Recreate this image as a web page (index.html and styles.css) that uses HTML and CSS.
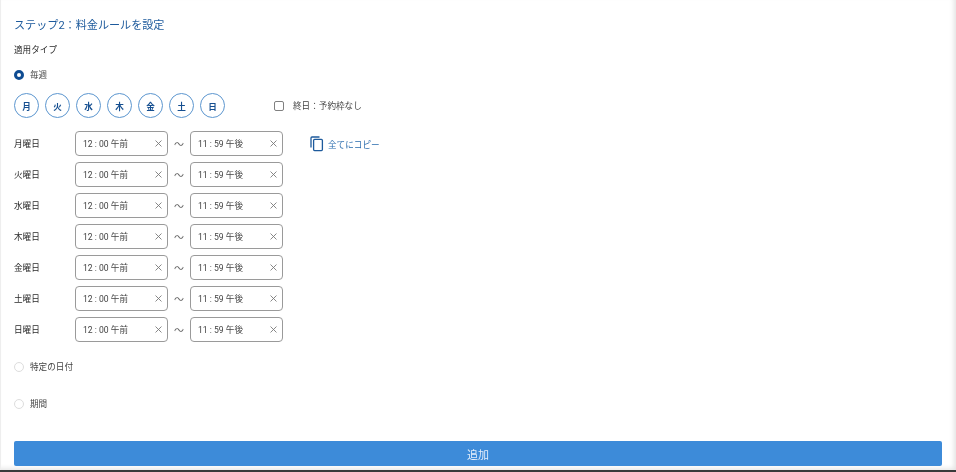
FILE: index.html
```html
<!DOCTYPE html>
<html lang="ja">
<head>
<meta charset="utf-8">
<title>料金ルール</title>
<link rel="stylesheet" href="styles.css">
</head>
<body>
<main class="panel">
  <h2 class="title">ステップ2：料金ルールを設定</h2>
  <div class="label type-label">適用タイプ</div>
  <div class="radio-row weekly"><span class="radio on"></span><span class="label">毎週</span></div>
  <div class="days-row">
    <div class="days">
      <span class="day">月</span><span class="day">火</span><span class="day">水</span><span class="day">木</span><span class="day">金</span><span class="day">土</span><span class="day">日</span>
    </div>
    <span class="check"></span><span class="label">終日：予約枠なし</span>
  </div>
  <div class="rows">
    <div class="row">
      <span class="label row-name">月曜日</span>
      <div class="field"><span>12 : 00 午前</span><svg class="x" viewBox="0 0 8 8"><path d="M.6.6l6.8 6.8M7.4.6L.6 7.4"/></svg></div>
      <span class="tilde">〜</span>
      <div class="field"><span>11 : 59 午後</span><svg class="x" viewBox="0 0 8 8"><path d="M.6.6l6.8 6.8M7.4.6L.6 7.4"/></svg></div>
      <div class="copy">
        <svg class="copy-icon" viewBox="0 0 14 16"><path d="M9.5 1H2a1 1 0 0 0-1 1v9.5"/><rect x="3.6" y="3.4" width="8.8" height="11.2" rx="1"/></svg>
        <span>全てにコピー</span>
      </div>
    </div>
    <div class="row">
      <span class="label row-name">火曜日</span>
      <div class="field"><span>12 : 00 午前</span><svg class="x" viewBox="0 0 8 8"><path d="M.6.6l6.8 6.8M7.4.6L.6 7.4"/></svg></div>
      <span class="tilde">〜</span>
      <div class="field"><span>11 : 59 午後</span><svg class="x" viewBox="0 0 8 8"><path d="M.6.6l6.8 6.8M7.4.6L.6 7.4"/></svg></div>
    </div>
    <div class="row">
      <span class="label row-name">水曜日</span>
      <div class="field"><span>12 : 00 午前</span><svg class="x" viewBox="0 0 8 8"><path d="M.6.6l6.8 6.8M7.4.6L.6 7.4"/></svg></div>
      <span class="tilde">〜</span>
      <div class="field"><span>11 : 59 午後</span><svg class="x" viewBox="0 0 8 8"><path d="M.6.6l6.8 6.8M7.4.6L.6 7.4"/></svg></div>
    </div>
    <div class="row">
      <span class="label row-name">木曜日</span>
      <div class="field"><span>12 : 00 午前</span><svg class="x" viewBox="0 0 8 8"><path d="M.6.6l6.8 6.8M7.4.6L.6 7.4"/></svg></div>
      <span class="tilde">〜</span>
      <div class="field"><span>11 : 59 午後</span><svg class="x" viewBox="0 0 8 8"><path d="M.6.6l6.8 6.8M7.4.6L.6 7.4"/></svg></div>
    </div>
    <div class="row">
      <span class="label row-name">金曜日</span>
      <div class="field"><span>12 : 00 午前</span><svg class="x" viewBox="0 0 8 8"><path d="M.6.6l6.8 6.8M7.4.6L.6 7.4"/></svg></div>
      <span class="tilde">〜</span>
      <div class="field"><span>11 : 59 午後</span><svg class="x" viewBox="0 0 8 8"><path d="M.6.6l6.8 6.8M7.4.6L.6 7.4"/></svg></div>
    </div>
    <div class="row">
      <span class="label row-name">土曜日</span>
      <div class="field"><span>12 : 00 午前</span><svg class="x" viewBox="0 0 8 8"><path d="M.6.6l6.8 6.8M7.4.6L.6 7.4"/></svg></div>
      <span class="tilde">〜</span>
      <div class="field"><span>11 : 59 午後</span><svg class="x" viewBox="0 0 8 8"><path d="M.6.6l6.8 6.8M7.4.6L.6 7.4"/></svg></div>
    </div>
    <div class="row">
      <span class="label row-name">日曜日</span>
      <div class="field"><span>12 : 00 午前</span><svg class="x" viewBox="0 0 8 8"><path d="M.6.6l6.8 6.8M7.4.6L.6 7.4"/></svg></div>
      <span class="tilde">〜</span>
      <div class="field"><span>11 : 59 午後</span><svg class="x" viewBox="0 0 8 8"><path d="M.6.6l6.8 6.8M7.4.6L.6 7.4"/></svg></div>
    </div>
  </div>
  <div class="radio-row specific"><span class="radio"></span><span class="label">特定の日付</span></div>
  <div class="radio-row period"><span class="radio"></span><span class="label">期間</span></div>
  <button class="add">追加</button>
</main>
</body>
</html>
```
FILE: styles.css
```css
* { box-sizing: border-box; }
html, body { margin: 0; height: 100%; overflow: hidden; }
body {
  background: #3a3a3a;
  font-family: Roboto, "Noto Sans CJK JP", sans-serif;
  color: #2b2b2b;
}
.panel {
  height: 470px;
  padding: 0 14px 0 13px;
  background: #fff;
  border-left: 1px solid #eeeeee;
  box-shadow: inset -6px 0 5px -4px #e2e2e2, inset 0 -5px 4px -3px #e8e8e8;
  display: flex;
  flex-direction: column;
  filter: blur(0.35px);
}
.title {
  margin: 18px 0 0;
  font-size: 11.1px;
  line-height: 15px;
  font-weight: 400;
  color: #1d5a9c;
}
.label { font-size: 8.6px; line-height: 12px; white-space: nowrap; }
.type-label { margin-top: 11px; }
.radio-row { display: flex; align-items: center; gap: 6px; height: 12px; color: #444; }
.weekly { margin-top: 13px; }
.specific { margin-top: 19px; }
.period { margin-top: 25px; }
.radio {
  width: 10px; height: 10px; border-radius: 50%;
  border: 1px solid #dddddd; background: #fff; flex: none;
}
.radio.on { border: 3px solid #0f4c92; }
.days-row { display: flex; align-items: center; margin-top: 12px; height: 25px; color: #444; }
.days { display: flex; gap: 6px; width: 260px; }
.day {
  width: 25px; height: 25px; border-radius: 50%;
  border: 1px solid #5c96cf;
  color: #164f90; font-size: 8.6px; font-weight: 700;
  display: flex; align-items: center; justify-content: center;
}
.check {
  width: 10px; height: 10px; border: 1px solid #808080; border-radius: 2px;
  margin-right: 9px;
}
.rows { display: flex; flex-direction: column; gap: 6px; margin-top: 13px; }
.row { display: flex; align-items: center; height: 25px; }
.row-name { width: 61px; }
.field {
  width: 93px; height: 25px; padding: 0 5px 1px 7px;
  border: 1px solid #9a9a9a; border-radius: 4px;
  display: flex; align-items: center; justify-content: space-between;
  font-size: 8.6px; color: #444;
}
.x { width: 7px; height: 7px; fill: none; stroke: #777; stroke-width: 1; }
.tilde { width: 22px; text-align: center; font-size: 10px; color: #666; }
.copy {
  display: flex; align-items: center; gap: 4px; margin-left: 27px;
  font-size: 8.6px; color: #2a6cae;
}
.copy-icon { width: 14px; height: 16px; fill: none; stroke: #1d5a9c; stroke-width: 1.3; }
.add {
  margin-top: 31px;
  width: 928px; height: 25px; flex: none;
  border: 0; border-radius: 2px;
  background: #3d8bd9; color: #e4eefa;
  font: 11px Roboto, "Noto Sans CJK JP", sans-serif;
}
```
